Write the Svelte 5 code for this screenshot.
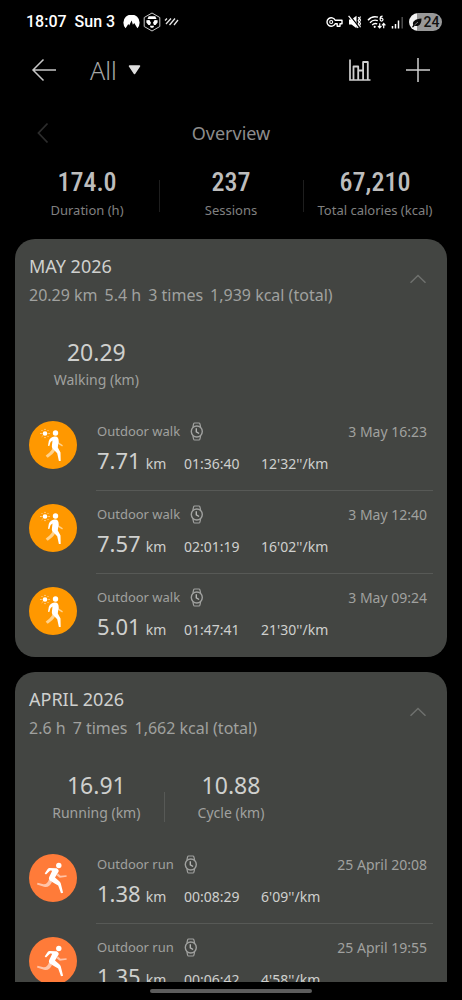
<script>
  const totals = [
    { value: '174.0', label: 'Duration (h)' },
    { value: '237', label: 'Sessions' },
    { value: '67,210', label: 'Total calories (kcal)' }
  ];

  let months = $state([
    {
      name: 'MAY 2026',
      open: true,
      summary: ['20.29 km', '5.4 h', '3 times', '1,939 kcal (total)'],
      sums: [{ value: '20.29', label: 'Walking (km)' }],
      sessions: [
        { kind: 'walk', title: 'Outdoor walk', date: '3 May 16:23', km: '7.71', time: '01:36:40', pace: "12'32''/km" },
        { kind: 'walk', title: 'Outdoor walk', date: '3 May 12:40', km: '7.57', time: '02:01:19', pace: "16'02''/km" },
        { kind: 'walk', title: 'Outdoor walk', date: '3 May 09:24', km: '5.01', time: '01:47:41', pace: "21'30''/km" }
      ]
    },
    {
      name: 'APRIL 2026',
      open: true,
      summary: ['2.6 h', '7 times', '1,662 kcal (total)'],
      sums: [
        { value: '16.91', label: 'Running (km)' },
        { value: '10.88', label: 'Cycle (km)' }
      ],
      sessions: [
        { kind: 'run', title: 'Outdoor run', date: '25 April 20:08', km: '1.38', time: '00:08:29', pace: "6'09''/km" },
        { kind: 'run', title: 'Outdoor run', date: '25 April 19:55', km: '1.35', time: '00:06:42', pace: "4'58''/km" }
      ]
    }
  ]);
</script>

<div class="screen">
  <div class="status">
    <span class="clock">18:07</span>
    <span class="day">Sun 3</span>
    <span class="notes">
      <svg width="17" height="14" viewBox="0 0 17 14" aria-hidden="true">
        <path d="M2.600 13.200A8.100 8.100 0 1 1 14.400 13.200L11.200 8l-1.300 1.800L8.600 5.600 6.200 10.400 5.300 9z" fill="#fff" />
      </svg>
      <svg width="18" height="20" viewBox="0 0 18 20" aria-hidden="true">
        <path d="M9 1l7.800 4.500v9L9 19l-7.800-4.500v-9z" fill="none" stroke="#c8c8c8" stroke-width="1" />
        <path d="M5.700 4.200h6.600l1.200 2.800h-9zM3.400 8.200l3-.2 1.600 2.800-1 2.200H5.400L3.400 10.400zM14.600 8.200l-3-.2-1.600 2.800 1 2.200h1.600l2-2.600zM6.800 13.800h4.400l-1 2H7.800z" fill="#fff" />
      </svg>
      <svg width="15" height="10" viewBox="0 0 15 10" aria-hidden="true">
        <path d="M1 3.500L3 1.500M2 7L7 1.500M5.500 8L11 1.500M10 8L14 3" fill="none" stroke="#e6e6e6" stroke-width="1.300" />
      </svg>
    </span>
    <span class="signals">
      <svg width="17" height="12" viewBox="0 0 17 12" aria-hidden="true">
        <path d="M9.200 4.200A4.300 4.300 0 1 0 9.200 7.800H11.200V10.200H14V7.800H16V4.200z" fill="none" stroke="#fff" stroke-width="1.400" stroke-linejoin="round" />
        <circle cx="5.200" cy="6" r="1.500" fill="none" stroke="#fff" stroke-width="1.100" />
      </svg>
      <svg width="14" height="14" viewBox="0 0 14 14" aria-hidden="true">
        <path d="M1 4.500h2.500l5-3.700v12.400l-5-3.700H1z" fill="#fff" />
        <path d="M1.500 0l9 11.500" stroke="#000" stroke-width="1.300" />
        <path d="M.6.800l9.500 12" stroke="#fff" stroke-width="1.300" />
        <path d="M10.200 2l1 1.700-1 1.700 1 1.700-1 1.700 1 1.700M12.500 1.500l-.9 1.800.9 1.800-.9 1.800.9 1.800-.9 1.800.9 1.800" fill="none" stroke="#fff" stroke-width="1.100" />
      </svg>
      <svg width="19" height="15" viewBox="0 0 19 15" aria-hidden="true">
        <path d="M1 5.200C3.600 2.100 7.600 1.200 11 2.200M3 7.700C5.200 5.200 8.300 4.700 10.800 5.700M5.200 10c1.400-1.500 3.100-1.900 5-1.100" fill="none" stroke="#fff" stroke-width="1.400" />
        <circle cx="7.700" cy="11.800" r="1.100" fill="#fff" />
        <path d="M15.600 1.200c-1.800 0-2.500 1.200-2.500 2.800M13.100 4.600a1.400 1.400 0 1 0 2.900 0 1.400 1.400 0 1 0-2.900 0M12.700 8.200v4.600M11 11l1.700 1.900 1.700-1.900M16.700 13.300V8.500M15 10.400l1.700-1.900 1.700 1.900" fill="none" stroke="#fff" stroke-width="1.200" />
      </svg>
      <svg width="13" height="13" viewBox="0 0 13 13" aria-hidden="true">
        <path d="M1.500 10v2.500M4.500 8v4.500M7.500 4.500v8" stroke="#fff" stroke-width="1.500" />
        <path d="M11.200 1v11.500" stroke="#4c4c4c" stroke-width="1.500" />
      </svg>
      <span class="battery">
        <svg width="10" height="12" viewBox="0 0 10 12" aria-hidden="true">
          <path d="M0 11l1.200-2C0 5.500 3 3 9.500 2.500 9.500 8 7 11 2.800 9.800L1 11.500z" fill="#0a0a0a" />
          <path d="M2.500 9L6 6" stroke="#999" stroke-width=".8" />
        </svg>24
      </span>
    </span>
  </div>

  <header class="bar">
    <button class="icon" aria-label="Back">
      <svg width="26" height="24" viewBox="0 0 26 24"><path d="M12.500 1.500L2 12l10.500 10.500M2 12h23" fill="none" stroke="#c6c6c6" stroke-width="1.500" /></svg>
    </button>
    <button class="filter">
      <span>All</span>
      <svg width="13" height="10" viewBox="0 0 13 10" aria-hidden="true"><path d="M1.500 1h10L6.500 8.500z" fill="#dedede" stroke="#dedede" stroke-width="1.500" stroke-linejoin="round" /></svg>
    </button>
    <button class="icon chart" aria-label="Charts">
      <svg width="24" height="24" viewBox="0 0 24 24"><path d="M2 1.500V22H22.500" fill="none" stroke="#d0d0d0" stroke-width="1.700" /><path d="M5.500 22V8.500h4.700V22M10.200 12.500h4.900M15.100 22V4h4.700V22" fill="none" stroke="#d0d0d0" stroke-width="1.800" stroke-linejoin="round" /></svg>
    </button>
    <button class="icon" aria-label="Add">
      <svg width="24" height="24" viewBox="0 0 24 24"><path d="M12 0v24M0 12h24" stroke="#d0d0d0" stroke-width="1.500" /></svg>
    </button>
  </header>

  <main>
    <section class="overview">
      <div class="pager">
        <button class="icon" aria-label="Previous">
          <svg width="12" height="22" viewBox="0 0 12 22"><path d="M10.500 1.500L1.500 11l9 9.500" fill="none" stroke="#2c2c2c" stroke-width="1.800" /></svg>
        </button>
        <h1>Overview</h1>
      </div>
      <dl class="totals">
        {#each totals as t}
          <div><dd>{t.value}</dd><dt>{t.label}</dt></div>
        {/each}
      </dl>
    </section>

    {#each months as month}
      <section class="card">
        <button class="head" aria-expanded={month.open} onclick={() => (month.open = !month.open)}>
          <span class="name">{month.name}</span>
          <span class="summary">{#each month.summary as part}<span>{part}</span>{/each}</span>
          <svg class:closed={!month.open} width="18" height="10" viewBox="0 0 18 10" aria-hidden="true"><path d="M1.500 8.800L9 1.500l7.500 7.300" fill="none" stroke="#6e706d" stroke-width="1.500" /></svg>
        </button>
        {#if month.open}
          <dl class="sums">
            {#each month.sums as s}
              <div><dd>{s.value}</dd><dt>{s.label}</dt></div>
            {/each}
          </dl>
          <ul>
            {#each month.sessions as s}
              <li>
                <span class="badge {s.kind}">
                  {#if s.kind === 'walk'}
                    <svg width="48" height="48" viewBox="0 0 48 48" aria-hidden="true">
                      <circle cx="16" cy="12.500" r="2.300" fill="#fff" />
                      <path d="M16 7.900v1.100M16 16v1.100M11.400 12.500h1.100M19.500 12.500h1.100M12.800 9.300l.7.700M18.500 15l.7.700M12.800 15.700l.7-.7M18.500 10l.7-.7" stroke="#fff" stroke-width=".8" />
                      <path d="M24 25C23.500 29.500 20.500 31.500 16.700 34.800L18.700 36.800C22.500 34 25 32 26.500 28.500zM29 19l1.200 2.700 3.700 2.600-.7 1.300-4.500-2.800z" fill="#ffd28c" />
                      <circle cx="26.500" cy="12" r="2.700" fill="#fff" />
                      <path d="M25.500 15.500c-2.700.3-5.200 2.300-5.700 4.500L19 24.800l1.300.2 1.300-4 1.900-1.500-.6 5.300c-.2 1.700.4 2.700 1.700 3.700l3.600 3.800 1.700 7.700h1.800L31.500 31.500l-2.700-5L29.600 20c.3-3-1.200-4.800-4.100-4.500z" fill="#fff" />
                    </svg>
                  {:else}
                    <svg width="48" height="48" viewBox="0 0 48 48" aria-hidden="true">
                      <path d="M20 25.500C18.800 29 17 30.500 14.500 30.200L8.500 28.700 8 30.500l7 2.300c3.500 1 6-.8 8-4.800zM29 19.500l2.500 2.200 6-.4.200 1.500-7 1-3.200-2.500z" fill="#ffc4a8" />
                      <circle cx="29.800" cy="11.500" r="2.700" fill="#fff" />
                      <path d="M26.500 14.200L21 14c-1.200 0-1.900.4-2.500 1.200L15.700 19.500 17 20.600l4.200-4 2 .2-3 6.200c-.7 1.700-.2 3 1.300 4l7.700 4.500 2.800 7.800 2.100-.5-2.300-9.300c-.3-1-.8-1.600-1.500-2.200L26 23.500l3.500-5.700c.8-1.700-.7-3.500-3-3.600z" fill="#fff" />
                    </svg>
                  {/if}
                </span>
                <div class="body">
                  <div class="top">
                    <span>{s.title}</span>
                    <svg width="14" height="19" viewBox="0 0 14 19" aria-label="Recorded on watch">
                      <path d="M2.900 5L3.600 1.800Q3.800 1 4.600 1h4.300q.8 0 1 .8L10.600 5M2.900 14l.7 3.200q.2.800 1 .8h4.300q.8 0 1-.8l.7-3.200" fill="none" stroke="#a0a19f" stroke-width="1.200" />
                      <circle cx="6.800" cy="9.500" r="5.500" fill="none" stroke="#a0a19f" stroke-width="1.400" />
                      <path d="M6.300 6.300v3.500l2.800 1.700" fill="none" stroke="#b4b5b3" stroke-width="1.400" />
                    </svg>
                    <time>{s.date}</time>
                  </div>
                  <div class="figures">
                    <span class="distance"><b>{s.km}</b><span>km</span></span>
                    <span>{s.time}</span>
                    <span>{s.pace}</span>
                  </div>
                </div>
              </li>
            {/each}
          </ul>
        {/if}
      </section>
    {/each}
  </main>

  <div class="nav"><span></span></div>
</div>

<style>
  :global(body) {
    margin: 0;
    background: #000;
  }
  .screen {
    display: flex;
    flex-direction: column;
    height: 100vh;
    overflow: hidden;
    background: #000;
    color: #a0a19f;
    font-family: 'Noto Sans', 'Open Sans', sans-serif;
    font-size: 14px;
    line-height: 20px;
  }
  button {
    margin: 0;
    padding: 0;
    border: 0;
    background: none;
    color: inherit;
    font: inherit;
    text-align: left;
    cursor: pointer;
  }
  svg {
    display: block;
    flex: none;
  }
  dl, dd, ul, h1 {
    margin: 0;
    padding: 0;
    font-weight: 400;
  }
  .status {
    display: flex;
    align-items: center;
    gap: 8px;
    padding: 10px 20px 10px 26px;
    height: 24px;
    flex: none;
    color: #fff;
    font-family: Roboto, sans-serif;
    font-size: 16px;
    font-weight: 500;
  }
  .notes, .signals {
    display: flex;
    align-items: center;
    gap: 3px;
  }
  .signals {
    margin-left: auto;
    gap: 5px;
  }
  .battery {
    display: flex;
    align-items: center;
    justify-content: center;
    gap: 2px;
    width: 33px;
    height: 18px;
    border-radius: 9px;
    background: linear-gradient(90deg, #f4f4f4 24%, #989898 24%);
    color: #111;
    font-size: 14px;
    line-height: 18px;
  }
  .bar {
    display: flex;
    align-items: center;
    flex: none;
    height: 52px;
    padding: 0 32px 0 31px;
  }
  .filter {
    display: flex;
    align-items: center;
    gap: 11px;
    margin-left: 33px;
    color: #a6a6a6;
    font-size: 25px;
    font-weight: 300;
    line-height: 32px;
  }
  .chart {
    margin-left: auto;
    margin-right: 34px;
  }
  main {
    flex: 1;
    min-height: 0;
    overflow-y: auto;
    scrollbar-width: none;
    padding: 0 15px;
  }
  .pager {
    display: grid;
    grid-template-columns: 1fr auto 1fr;
    align-items: center;
    height: 40px;
    padding: 17px 22px 8px;
  }
  h1 {
    color: #8c8c8c;
    font-size: 18px;
    line-height: 24px;
  }
  .totals {
    display: grid;
    grid-template-columns: repeat(3, 1fr);
    height: 78px;
    text-align: center;
  }
  .totals div {
    position: relative;
    display: flex;
    flex-direction: column;
    align-items: center;
    padding-top: 3px;
    white-space: nowrap;
  }
  .totals div + div::before {
    content: '';
    position: absolute;
    left: 0;
    top: 19px;
    height: 32px;
    width: 1px;
    background: #1e1e1e;
  }
  .totals dd {
    color: #bdbdbd;
    font-family: 'Roboto Condensed', 'Liberation Sans Narrow', Roboto, sans-serif;
    font-size: 26px;
    font-weight: 500;
    line-height: 36px;
  }
  .totals dt {
    color: #808080;
    font-size: 13px;
    line-height: 20px;
  }
  .card {
    margin-bottom: 15px;
    border-radius: 20px;
    background: #434542;
    overflow: hidden;
  }
  .head {
    display: grid;
    grid-template-columns: 1fr auto;
    align-items: center;
    width: 100%;
    padding: 13px 20px 14px 14px;
  }
  .head svg {
    grid-column: 2;
    grid-row: 1 / 3;
    margin-top: -4px;
  }
  .head svg.closed {
    transform: rotate(180deg);
  }
  .name {
    color: #cfd0ce;
    font-size: 18px;
    line-height: 28px;
  }
  .summary {
    display: flex;
    gap: 7px;
    font-size: 16px;
    line-height: 30px;
  }
  .sums {
    display: grid;
    grid-template-columns: repeat(3, 1fr);
    padding: 12px 14px 16px;
    text-align: center;
  }
  .sums div {
    position: relative;
  }
  .sums div + div::before {
    content: '';
    position: absolute;
    left: 0;
    top: 23px;
    height: 30px;
    width: 1px;
    background: #575956;
  }
  .sums dd {
    color: #cfd0ce;
    font-size: 23px;
    line-height: 32px;
  }
  .sums dt {
    font-size: 14px;
    line-height: 24px;
  }
  ul {
    list-style: none;
  }
  li {
    display: flex;
    align-items: flex-start;
    gap: 19px;
    padding: 0 14px;
  }
  .badge {
    flex: none;
    width: 48px;
    height: 48px;
    margin-top: 13px;
    border-radius: 50%;
  }
  .walk {
    background: #ff9800;
  }
  .run {
    background: #ff7b39;
  }
  .body {
    flex: 1;
    min-width: 0;
    height: 82px;
    border-bottom: 1px solid #575956;
  }
  li:last-child .body {
    border-color: transparent;
  }
  .top {
    display: flex;
    align-items: center;
    gap: 10px;
    padding: 13px 6px 0 1px;
    line-height: 21px;
  }
  .top > span {
    font-size: 13px;
  }
  time {
    margin-left: auto;
  }
  .figures {
    display: grid;
    grid-template-columns: 87px 77px auto;
    align-items: baseline;
    padding-left: 1px;
    color: #cfd0ce;
    line-height: 36px;
  }
  .distance {
    display: flex;
    align-items: baseline;
    gap: 5px;
  }
  .figures b {
    font-size: 22px;
    font-weight: 400;
  }
  .nav {
    display: flex;
    justify-content: center;
    align-items: center;
    flex: none;
    height: 18px;
  }
  .nav span {
    width: 35%;
    height: 4px;
    border-radius: 2px;
    background: #5c5c5c;
  }
</style>
